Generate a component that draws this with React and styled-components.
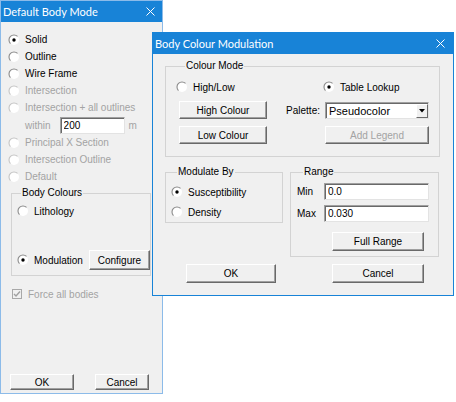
import React from 'react';
import styled, { createGlobalStyle } from 'styled-components';

const GlobalStyle = createGlobalStyle`
  html, body {
    margin: 0;
    padding: 0;
    background: #fff;
  }
  body {
    font-family: "Liberation Sans", Arial, sans-serif;
    font-size: 10px;
    color: #000;
  }
  * {
    box-sizing: border-box;
  }
`;

const Desktop = styled.div`
  position: relative;
  width: 456px;
  height: 402px;
  overflow: hidden;
  background: #fff;
`;

// dialogs sit on the desktop at their own spots
const Window = styled.div`
  position: absolute;
  left: ${(p) => p.$x}px;
  top: ${(p) => p.$y}px;
  width: ${(p) => p.$w}px;
  height: ${(p) => p.$h}px;
  display: flex;
  flex-direction: column;
  border: 1px solid ${(p) => (p.$active ? '#1883d7' : '#8cbbe9')};
  background: #f0f0f0;
`;

const TitleBar = styled.div`
  flex: none;
  height: 21px;
  display: flex;
  align-items: center;
  justify-content: space-between;
  padding: 0 ${(p) => p.$pr}px 0 2px;
  background: #1883d7;
  color: #fff;
  font-family: Lato, "Liberation Sans", sans-serif;
  font-size: 11px;
`;

const Body = styled.div`
  flex: 1;
  display: flex;
  flex-direction: column;
  padding: ${(p) => p.$pad};
`;

const Option = styled.div`
  display: flex;
  align-items: center;
  gap: 5px;
  height: ${(p) => p.$h || 17}px;
  margin: ${(p) => p.$m || 0};
  color: ${(p) => (p.$disabled ? '#a3a3a3' : '#000')};
  white-space: nowrap;
`;

const WithinRow = styled.div`
  display: flex;
  align-items: center;
  height: 18px;
  padding-left: 17px;
  color: #a3a3a3;
`;

const Group = styled.fieldset`
  margin: ${(p) => p.$m || 0};
  padding: ${(p) => p.$pad || 0};
  width: ${(p) => p.$w}px;
  min-width: 0;
  flex: none;
  border: 1px solid #d3d3d3;
  display: flex;
  flex-direction: column;
`;

const Legend = styled.legend`
  margin-left: ${(p) => p.$off}px;
  padding: 0 1px;
  line-height: 12px;
`;

const Button = styled.button`
  flex: none;
  width: ${(p) => p.$w}px;
  height: ${(p) => p.$h || 19}px;
  margin: ${(p) => p.$m || 0};
  padding: 0;
  font: inherit;
  color: ${(p) => (p.disabled ? '#a3a3a3' : '#000')};
  background: #f0f0f0;
  border: 1px solid;
  border-color: #fff #696969 #696969 #fff;
  box-shadow: inset -1px -1px 0 #a0a0a0;
`;

const Field = styled.input`
  flex: none;
  width: ${(p) => p.$w}px;
  height: ${(p) => p.$h || 17}px;
  margin: ${(p) => p.$m || 0};
  padding: 0 3px;
  font: inherit;
  color: #000;
  background: #fff;
  border: 1px solid;
  border-color: #a0a0a0 #e3e3e3 #e3e3e3 #a0a0a0;
  box-shadow: inset 1px 1px 0 #696969;
  outline: none;
`;

const CheckRow = styled.div`
  display: flex;
  align-items: center;
  gap: 6px;
  height: 16px;
  margin-top: 10px;
  padding-left: 4px;
  color: #a3a3a3;
`;

const ButtonRow = styled.div`
  display: flex;
  align-items: center;
  gap: ${(p) => p.$gap}px;
  margin-top: ${(p) => p.$mt || 'auto'};
  padding-left: ${(p) => p.$pl}px;
`;

const ModeGrid = styled.div`
  display: grid;
  grid-template-columns: 88px 58px 104px;
  grid-template-rows: 14px 18px 18px;
  row-gap: 7px;
  align-items: center;
`;

const PaletteLabel = styled.span`
  justify-self: end;
  padding-right: 5px;
`;

const Combo = styled.div`
  display: flex;
  height: 17px;
  background: #fff;
  border: 1px solid;
  border-color: #a0a0a0 #e3e3e3 #e3e3e3 #a0a0a0;
  box-shadow: inset 1px 1px 0 #696969;
`;

const ComboText = styled.span`
  flex: 1;
  padding: 1px 0 0 3px;
  line-height: 14px;
  font-size: 11px;
`;

const ComboArrow = styled.div`
  width: 12px;
  display: flex;
  align-items: center;
  justify-content: center;
  background: #f0f0f0;
  border: 1px solid;
  border-color: #fff #696969 #696969 #fff;
  margin: 1px 0 0 0;
`;

const SideBySide = styled.div`
  display: flex;
  align-items: flex-start;
  gap: 7px;
  margin-top: 9px;
`;

const RangeRow = styled.div`
  display: flex;
  align-items: center;
  height: 17px;
  margin-top: ${(p) => p.$mt || 0}px;
`;

const RangeLabel = styled.span`
  width: 27px;
`;

const RadioMark = ({ checked, disabled }) => (
  <svg width="12" height="12" viewBox="0 0 12 12" style={{ flex: 'none' }}>
    <circle cx="6" cy="6" r="5" fill="#fff" />
    <path
      d="M2.46 9.54 A5 5 0 0 1 9.54 2.46"
      fill="none"
      stroke={disabled ? '#c4c4c4' : '#8a8a8a'}
      strokeWidth="1.1"
    />
    {checked && <circle cx="6" cy="6" r="1.7" fill="#000" />}
  </svg>
);

const Radio = ({ checked, disabled, h, m, children }) => (
  <Option $disabled={disabled} $h={h} $m={m}>
    <RadioMark checked={checked} disabled={disabled} />
    {children}
  </Option>
);

const CloseIcon = () => (
  <svg width="9" height="9" viewBox="0 0 9 9">
    <path d="M0.5 0.5 L8.5 8.5 M8.5 0.5 L0.5 8.5" stroke="#fff" strokeWidth="1" />
  </svg>
);

const CheckMark = () => (
  <svg width="10" height="10" viewBox="0 0 10 10" style={{ flex: 'none' }}>
    <rect x="0.5" y="0.5" width="9" height="9" fill="#f0f0f0" stroke="#a8a8a8" />
    <path d="M2 5 L4 7 L8 2.5" fill="none" stroke="#a0a0a0" strokeWidth="1.4" />
  </svg>
);

const DownArrow = () => (
  <svg width="6" height="4" viewBox="0 0 6 4">
    <path d="M0 0 H6 L3 3.5 Z" fill="#000" />
  </svg>
);

const App = () => {
  return (
    <Desktop>
      <GlobalStyle />

      <Window $x={0} $y={0} $w={163} $h={394}>
        <TitleBar $pr={7}>
          <span>Default Body Mode</span>
          <CloseIcon />
        </TitleBar>
        <Body $pad="9px 0 3px 7px">
          <Radio checked>Solid</Radio>
          <Radio>Outline</Radio>
          <Radio>Wire Frame</Radio>
          <Radio disabled>Intersection</Radio>
          <Radio disabled>Intersection + all outlines</Radio>
          <WithinRow>
            within
            <Field $w={65} $m="0 4px 0 9px" defaultValue="200" readOnly />
            m
          </WithinRow>
          <Radio disabled>Principal X Section</Radio>
          <Radio disabled>Intersection Outline</Radio>
          <Radio disabled>Default</Radio>

          <Group $m="2px 0 0 3px" $w={140} $pad="4px 0 5px 5px">
            <Legend $off={4}>Body Colours</Legend>
            <Radio h={16}>Lithology</Radio>
            <Radio checked h={20} m="31px 0 0 0">
              Modulation
              <Button $w={61} $h={20} $m="0 0 0 1px">Configure</Button>
            </Radio>
          </Group>

          <CheckRow>
            <CheckMark />
            Force all bodies
          </CheckRow>

          <ButtonRow $gap={21} $pl={2}>
            <Button $w={64} $h={16}>OK</Button>
            <Button $w={54} $h={16}>Cancel</Button>
          </ButtonRow>
        </Body>
      </Window>

      <Window $x={152} $y={32} $w={302} $h={264} $active>
        <TitleBar $pr={8}>
          <span>Body Colour Modulation</span>
          <CloseIcon />
        </TitleBar>
        <Body $pad="6px 0 0 12px">
          <Group $w={275} $pad="8px 0 12px 13px">
            <Legend $off={6}>Colour Mode</Legend>
            <ModeGrid>
              <Radio h={14} m="0 0 0 -3px">High/Low</Radio>
              <span />
              <Radio checked h={14} m="0 0 0 -2px">Table Lookup</Radio>

              <Button $w={88} $h={18}>High Colour</Button>
              <PaletteLabel>Palette:</PaletteLabel>
              <Combo>
                <ComboText>Pseudocolor</ComboText>
                <ComboArrow>
                  <DownArrow />
                </ComboArrow>
              </Combo>

              <Button $w={88} $h={18}>Low Colour</Button>
              <span />
              <Button $w={104} $h={18} disabled>Add Legend</Button>
            </ModeGrid>
          </Group>

          <SideBySide>
            <Group $w={118} $pad="6px 0 2px 5px">
              <Legend $off={6}>Modulate By</Legend>
              <Radio checked h={16}>Susceptibility</Radio>
              <Radio h={16} m="4px 0 0 0">Density</Radio>
            </Group>

            <Group $w={149} $pad="5px 0 5px 6px">
              <Legend $off={6}>Range</Legend>
              <RangeRow>
                <RangeLabel>Min</RangeLabel>
                <Field $w={105} defaultValue="0.0" readOnly />
              </RangeRow>
              <RangeRow $mt={5}>
                <RangeLabel>Max</RangeLabel>
                <Field $w={105} defaultValue="0.030" readOnly />
              </RangeRow>
              <ButtonRow $mt="10px" $pl={35} $gap={0}>
                <Button $w={92} $h={19}>Full Range</Button>
              </ButtonRow>
            </Group>
          </SideBySide>

          <ButtonRow $mt="7px" $pl={21} $gap={56}>
            <Button $w={90} $h={19}>OK</Button>
            <Button $w={92} $h={19}>Cancel</Button>
          </ButtonRow>
        </Body>
      </Window>
    </Desktop>
  );
};

export default App;
